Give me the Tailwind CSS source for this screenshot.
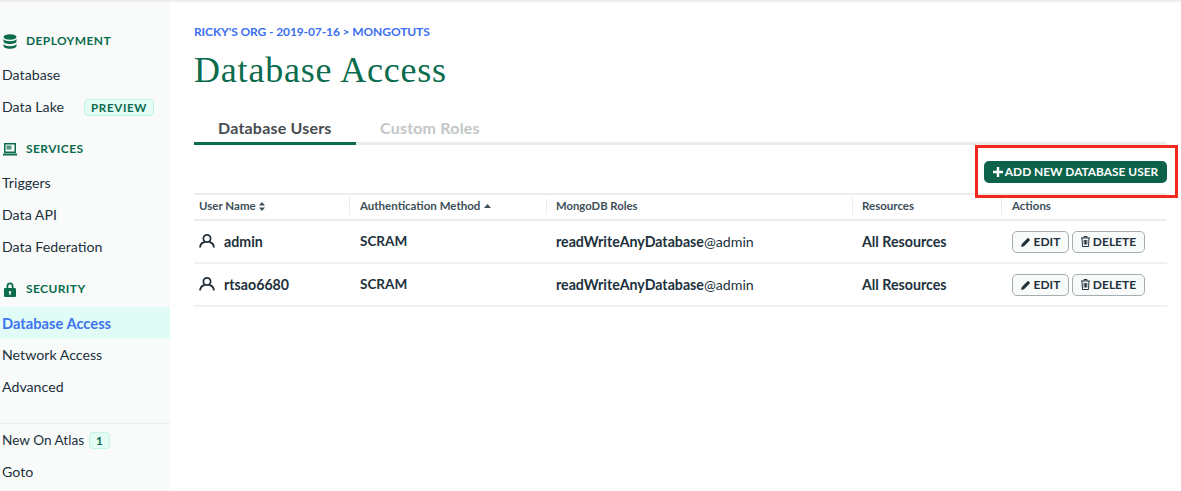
<!DOCTYPE html>
<html lang="en">
<head>
  <meta charset="UTF-8" />
  <title>Database Access</title>
  <script src="https://cdn.jsdelivr.net/npm/@tailwindcss/browser@4"></script>
</head>
<body class="bg-white font-['Lato','Liberation_Sans',sans-serif] text-[#21313c] overflow-hidden">
  <div class="relative flex h-[491px] w-[1181px] overflow-hidden">
    <!-- top shadow -->
    <div class="absolute left-0 top-0 h-[3px] w-full bg-gradient-to-b from-[#e8e8e8] to-white/0"></div>

    <!-- sidebar -->
    <aside class="flex h-full w-[170px] shrink-0 flex-col bg-[#f9fbfa] pt-[25px] text-[14.2px]">
      <div class="flex h-[32px] items-center gap-[9px] pl-[3px] text-[12px] font-bold tracking-[0.4px] text-[#0a6b4d]">
        <svg class="h-[15px] w-[14px]" viewBox="0 0 14 15" fill="#0a6b4d"><ellipse cx="7" cy="3" rx="6.5" ry="2.8"/><path d="M.5 5c1 1.5 3.500 2.200 6.500 2.200S12.500 6.500 13.500 5v2.500C13.500 9 10.500 10 7 10S.5 9 .5 7.500z"/><path d="M.5 10c1 1.500 3.500 2.200 6.500 2.200s5.500-.7 6.500-2.200v2c0 1.500-3 2.700-6.500 2.700S.5 13.500.5 12z"/></svg>
        DEPLOYMENT
      </div>
      <div class="mt-[2px] flex h-[32px] items-center pl-[2px]">Database</div>
      <div class="flex h-[32px] items-center pl-[2px]">
        Data Lake
        <span class="ml-[20px] rounded-[4px] border border-[#c3f3e3] bg-[#e3fcf5] px-[6px] text-[11.5px] leading-[15px] font-bold tracking-[0.7px] text-[#0a6b4d]">PREVIEW</span>
      </div>
      <div class="mt-[10px] flex h-[32px] items-center gap-[9px] pl-[3px] text-[12px] font-bold tracking-[0.4px] text-[#0a6b4d]">
        <svg class="h-[14px] w-[14px]" viewBox="0 0 14 14" fill="#0a6b4d"><path fill-rule="evenodd" d="M1 1h12v10H1zM2.500 2.500v7h9v-7z"/><rect x="3.500" y="3.500" width="5" height="4" opacity=".7"/><rect x="0" y="11.500" width="14" height="2"/></svg>
        SERVICES
      </div>
      <div class="mt-[2px] flex h-[32px] items-center pl-[2px]">Triggers</div>
      <div class="flex h-[32px] items-center pl-[2px]">Data API</div>
      <div class="flex h-[32px] items-center pl-[2px]">Data Federation</div>
      <div class="mt-[10px] flex h-[32px] items-center gap-[10px] pl-[4px] text-[12px] font-bold tracking-[0.4px] text-[#0a6b4d]">
        <svg class="h-[15px] w-[12px]" viewBox="0 0 12 15" fill="#0a6b4d"><path fill-rule="evenodd" d="M2.500 6V4a3.500 3.500 0 0 1 7 0v2h1.200c.7 0 1.300.6 1.300 1.300v6.400c0 .7-.6 1.300-1.300 1.300H1.300C.6 15 0 14.400 0 13.700V7.300C0 6.600.6 6 1.300 6zM4.300 6h3.400V4a1.700 1.700 0 0 0-3.400 0zM6 9a1.200 1.200 0 0 0-.7 2.200V13h1.400v-1.800A1.200 1.200 0 0 0 6 9z"/></svg>
        SECURITY
      </div>
      <div class="mt-[2px] flex h-[32px] items-center bg-[#e1fcf6] pl-[2px] text-[14.7px] font-bold text-[#3f74ee]">Database Access</div>
      <div class="flex h-[32px] items-center pl-[2px]">Network Access</div>
      <div class="flex h-[32px] items-center pl-[2px]">Advanced</div>
      <div class="mt-[20px] border-t border-[#e7eeec]"></div>
      <div class="flex h-[32px] items-center pl-[2px] text-[13.6px]">
        New On Atlas
        <span class="ml-[5px] rounded-[4px] border border-[#c3f3e3] bg-[#e3fcf5] px-[6px] text-[11.5px] leading-[15px] font-bold text-[#0a6b4d]">1</span>
      </div>
      <div class="flex h-[32px] items-center pl-[2px]">Goto</div>
    </aside>

    <!-- main -->
    <main class="flex-1 pl-[24px] pr-[14px] pt-[24px]">
      <div class="h-[16px] text-[12px] leading-[16px] font-bold tracking-[-0.1px] text-[#3b6ff0]">RICKY'S ORG - 2019-07-16 &gt; MONGOTUTS</div>
      <h1 class="mt-[10px] h-[40px] font-['Liberation_Serif',serif] text-[36px] leading-[40px] tracking-[0.8px] text-[#0a6b4d]">Database Access</h1>

      <div class="mt-[28px] flex border-b-[3px] border-[#e7eeec] text-[16px] font-bold tracking-[0.2px]">
        <div class="-mb-[3px] w-[162px] border-b-[3px] border-[#0a6b4d] pb-[5px] pl-[24px] leading-[19px] text-[#464c4f]">Database Users</div>
        <div class="pl-[24px] leading-[19px] text-[#c2c7c7]">Custom Roles</div>
      </div>

      <div class="mt-[16px] flex justify-end">
        <button class="flex h-[22px] w-[183px] items-center justify-center gap-[2px] rounded-[5px] bg-[#0c6349] text-[11.9px] font-bold text-white">
          <svg class="h-[10px] w-[10px]" viewBox="0 0 10 10" fill="#fff"><path d="M3.800 0h2.400v3.800H10v2.400H6.200V10H3.800V6.200H0V3.800h3.800z"/></svg>
          ADD NEW DATABASE USER
        </button>
      </div>

      <table class="mt-[10px] w-[973px] table-fixed border-collapse border-t-2 border-[#e7eeec] text-[14.2px]">
        <colgroup>
          <col class="w-[155px]" /><col class="w-[197px]" /><col class="w-[306px]" /><col class="w-[149px]" /><col class="w-[166px]" />
        </colgroup>
        <thead class="text-[11.500px] font-bold text-[#3d4f58]">
          <tr class="h-[26px] border-b-2 border-[#e7eeec]">
            <th class="px-[5px] pb-[2px] text-left font-bold">
              <span class="flex items-center gap-[3px]">User Name
                <svg class="h-[9px] w-[6px]" viewBox="0 0 6 9" fill="#3d4f58"><path d="M3 0l3 3.500H0zM3 9L0 5.500h6z"/></svg>
              </span>
            </th>
            <th class="pb-[2px] pl-[11px] text-left font-bold">
              <span class="flex items-center gap-[4px] border-l border-[#e7eeec] -ml-[11px] pl-[10px]">Authentication Method
                <svg class="h-[4px] w-[7px]" viewBox="0 0 7 4" fill="#3d4f58"><path d="M3.500 0L7 4H0z"/></svg>
              </span>
            </th>
            <th class="pb-[2px] text-left font-bold"><span class="block border-l border-[#e7eeec] pl-[9px] text-[11.3px]">MongoDB Roles</span></th>
            <th class="pb-[2px] text-left font-bold"><span class="block border-l border-[#e7eeec] pl-[9px]">Resources</span></th>
            <th class="pb-[2px] text-left font-bold"><span class="block border-l border-[#e7eeec] pl-[10px]">Actions</span></th>
          </tr>
        </thead>
        <tbody>
          <tr class="h-[43px] border-b-2 border-[#eef2f1]">
            <td class="px-[5px] font-bold">
              <span class="flex items-center gap-[9px]">
                <svg class="h-[14px] w-[16px]" viewBox="0 0 16 14" fill="none" stroke="#21313c" stroke-width="1.800"><circle cx="8" cy="4.500" r="3.600"/><path d="M1 13.500c.3-3 2.500-5 4.800-5.500M15 13.500c-.3-3-2.500-5-4.800-5.500"/></svg>
                admin
              </span>
            </td>
            <td class="pl-[11px] text-[13.5px] font-bold">SCRAM</td>
            <td class="pl-[10px]"><b>readWriteAnyDatabase</b>@admin</td>
            <td class="pl-[10px] font-bold">All Resources</td>
            <td class="pl-[11px]">
              <span class="flex gap-[3px]">
                <button class="flex h-[22px] w-[57px] items-center justify-center gap-[3px] rounded-[5px] border border-[#a5aeaf] bg-[#f9fbfa] text-[12px] font-bold">
                  <svg class="h-[10px] w-[10px]" viewBox="0 0 10 10" fill="#21313c"><path d="M7 .8l2.200 2.200L3 9.200 0 10l.8-3z"/></svg>
                  EDIT
                </button>
                <button class="flex h-[22px] w-[73px] items-center justify-center gap-[3px] rounded-[5px] border border-[#a5aeaf] bg-[#f9fbfa] text-[12px] font-bold">
                  <svg class="h-[11px] w-[9px]" viewBox="0 0 9 11" fill="none" stroke="#21313c" stroke-width="1"><path d="M0 2h9M3 2V.5h3V2M1 2l.5 8.500h6L8 2M3.200 4v4.500M4.500 4v4.500M5.800 4v4.500"/></svg>
                  DELETE
                </button>
              </span>
            </td>
          </tr>
          <tr class="h-[43px] border-b-2 border-[#eef2f1]">
            <td class="px-[5px] font-bold">
              <span class="flex items-center gap-[9px]">
                <svg class="h-[14px] w-[16px]" viewBox="0 0 16 14" fill="none" stroke="#21313c" stroke-width="1.800"><circle cx="8" cy="4.500" r="3.600"/><path d="M1 13.500c.3-3 2.500-5 4.800-5.500M15 13.500c-.3-3-2.500-5-4.800-5.500"/></svg>
                rtsao6680
              </span>
            </td>
            <td class="pl-[11px] text-[13.5px] font-bold">SCRAM</td>
            <td class="pl-[10px]"><b>readWriteAnyDatabase</b>@admin</td>
            <td class="pl-[10px] font-bold">All Resources</td>
            <td class="pl-[11px]">
              <span class="flex gap-[3px]">
                <button class="flex h-[22px] w-[57px] items-center justify-center gap-[3px] rounded-[5px] border border-[#a5aeaf] bg-[#f9fbfa] text-[12px] font-bold">
                  <svg class="h-[10px] w-[10px]" viewBox="0 0 10 10" fill="#21313c"><path d="M7 .8l2.200 2.200L3 9.200 0 10l.8-3z"/></svg>
                  EDIT
                </button>
                <button class="flex h-[22px] w-[73px] items-center justify-center gap-[3px] rounded-[5px] border border-[#a5aeaf] bg-[#f9fbfa] text-[12px] font-bold">
                  <svg class="h-[11px] w-[9px]" viewBox="0 0 9 11" fill="none" stroke="#21313c" stroke-width="1"><path d="M0 2h9M3 2V.5h3V2M1 2l.5 8.500h6L8 2M3.200 4v4.500M4.500 4v4.500M5.800 4v4.500"/></svg>
                  DELETE
                </button>
              </span>
            </td>
          </tr>
        </tbody>
      </table>
    </main>

    <!-- red annotation box -->
    <div class="absolute left-[975px] top-[145px] h-[53px] w-[203px] border-[3px] border-[#f5281e]"></div>
  </div>
</body>
</html>
